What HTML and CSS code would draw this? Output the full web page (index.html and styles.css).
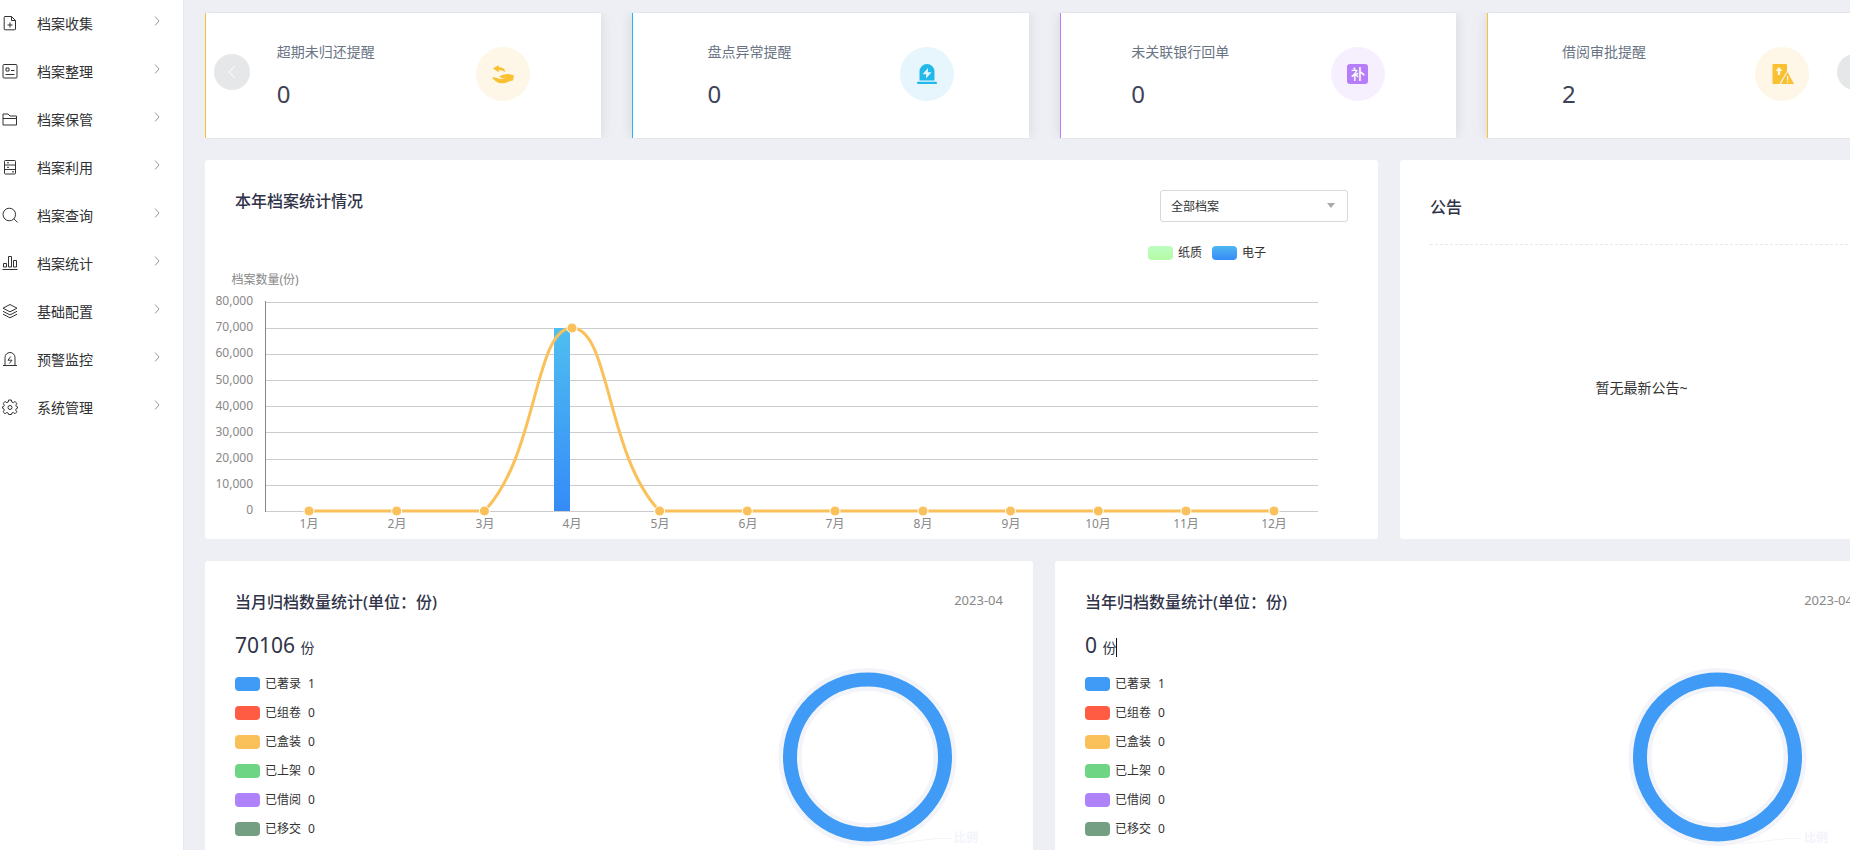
FILE: index.html
```html
<!DOCTYPE html>
<html lang="zh-CN">
<head>
<meta charset="utf-8">
<title>档案管理</title>
<link rel="stylesheet" href="styles.css">
</head>
<body>
<div class="app">
  <nav class="sidebar">
    <a class="nav-item" href="#collect">
      <svg class="nav-icon" viewBox="0 0 16 16"><path d="M3 1.500h6.500l4 4V14a.8.8 0 0 1-.8.8H3a.8.8 0 0 1-.8-.8V2.300a.8.8 0 0 1 .8-.8zM9.500 1.500v4h4M8 7.500v5M5.500 10h5"/></svg>
      <span>档案收集</span><svg class="nav-arrow" viewBox="0 0 6 10"><path d="M1 .5 5 5 1 9.500"/></svg></a>
    <a class="nav-item" href="#arrange">
      <svg class="nav-icon" viewBox="0 0 16 16"><rect x="1" y="1.500" width="14" height="13.500" rx="1"/><path d="M4 5h3v3H4zM9 7.500h3.500M3.500 11.500h9"/></svg>
      <span>档案整理</span><svg class="nav-arrow" viewBox="0 0 6 10"><path d="M1 .5 5 5 1 9.500"/></svg></a>
    <a class="nav-item" href="#keep">
      <svg class="nav-icon" viewBox="0 0 16 16"><path d="M1 14V3h5l2 2h6.500v9zM1 7.500h13.500"/></svg>
      <span>档案保管</span><svg class="nav-arrow" viewBox="0 0 6 10"><path d="M1 .5 5 5 1 9.500"/></svg></a>
    <a class="nav-item" href="#use">
      <svg class="nav-icon" viewBox="0 0 16 16"><rect x="2.500" y="1.500" width="11" height="13.500" rx=".8"/><path d="M2.500 6h11M2.500 10.500h11M5 3.800h2M5 8.300h2M10 12.800h2"/></svg>
      <span>档案利用</span><svg class="nav-arrow" viewBox="0 0 6 10"><path d="M1 .5 5 5 1 9.500"/></svg></a>
    <a class="nav-item" href="#search">
      <svg class="nav-icon" viewBox="0 0 16 16"><circle cx="7.300" cy="7.500" r="6.300"/><path d="m12 12 3.500 3.300"/></svg>
      <span>档案查询</span><svg class="nav-arrow" viewBox="0 0 6 10"><path d="M1 .5 5 5 1 9.500"/></svg></a>
    <a class="nav-item" href="#stats">
      <svg class="nav-icon" viewBox="0 0 16 16"><path d="M1.500 12V8.500h3V12zM6.500 12V1.500h3V12zM11.500 12V5.500h3V12zM.5 14.500h15"/></svg>
      <span>档案统计</span><svg class="nav-arrow" viewBox="0 0 6 10"><path d="M1 .5 5 5 1 9.500"/></svg></a>
    <a class="nav-item" href="#config">
      <svg class="nav-icon" viewBox="0 0 16 16"><path d="m8 1.500 7 3.700-7 3.600-7-3.600zM1 8.300l7 3.600 7-3.600M1 11.200l7 3.600 7-3.600"/></svg>
      <span>基础配置</span><svg class="nav-arrow" viewBox="0 0 6 10"><path d="M1 .5 5 5 1 9.500"/></svg></a>
    <a class="nav-item" href="#alert">
      <svg class="nav-icon" viewBox="0 0 16 16"><path d="M3 14.500V6.500a5 5 0 0 1 10 0v8M1 14.500h14M8.700 5.500 6 9.200h4L7.300 12.500"/></svg>
      <span>预警监控</span><svg class="nav-arrow" viewBox="0 0 6 10"><path d="M1 .5 5 5 1 9.500"/></svg></a>
    <a class="nav-item" href="#system">
      <svg class="nav-icon" viewBox="0 0 16 16"><path d="M6.600 1h2.800l.4 2 1.500.7 1.700-1.200 1.900 1.900-1.100 1.800.6 1.400 1.100.2v1.400l-1.200.4-.6 1.500 1.200 1.700-1.900 1.900-1.700-1.200-1.500.6-.4 1.400H6.600l-.4-1.400-1.500-.6L3 14.700l-1.900-1.900 1.200-1.700-.6-1.500L.5 9.200V7.800l1.200-.2.6-1.400L1.200 4.400l1.900-1.900 1.700 1.200L6.200 3z"/><circle cx="8" cy="8.500" r="2"/></svg>
      <span>系统管理</span><svg class="nav-arrow" viewBox="0 0 6 10"><path d="M1 .5 5 5 1 9.500"/></svg></a>
  </nav>

  <main class="main">
    <section class="reminders">
      <article class="reminder amber">
        <div class="reminder-body"><h3 class="reminder-name">超期未归还提醒</h3><p class="reminder-count">0</p></div>
        <span class="badge"><svg class="badge-icon" viewBox="0 0 24 24"><path d="M2 6.500 7.700 3v1.900c3.800.2 6.200 1.700 7 5.300-2-1.400-4.200-1.900-7-1.900v2z"/><path d="M1 15.500c2.500-1 5 .7 7 1.200 2 .4 4.500.2 6.500-.9-2 .2-4.800.2-6.200-.9.600-1.500 2.900-1.500 4.700-2.300 3-1.300 6-.6 10 .9l-1 5c-2.500-.2-4.500 1.500-7 2.200-2.500.5-5 .8-7 .2-3-1-5-2.700-7-5.400z"/></svg></span>
      </article>
      <article class="reminder cyan">
        <div class="reminder-body"><h3 class="reminder-name">盘点异常提醒</h3><p class="reminder-count">0</p></div>
        <span class="badge"><svg class="badge-icon" viewBox="0 0 24 24"><path d="M4.500 18.500V9.500a7.500 7.500 0 0 1 15 0v9z"/><rect x="2" y="19.700" width="20" height="2.300" rx="1"/><path class="cut" d="M13 6 7.500 12.300h3.700L11 16.500l5.500-6.200h-3.700z"/></svg></span>
      </article>
      <article class="reminder violet">
        <div class="reminder-body"><h3 class="reminder-name">未关联银行回单</h3><p class="reminder-count">0</p></div>
        <span class="badge"><span class="badge-word">补</span></span>
      </article>
      <article class="reminder amber">
        <div class="reminder-body"><h3 class="reminder-name">借阅审批提醒</h3><p class="reminder-count">2</p></div>
        <span class="badge"><svg class="badge-icon" viewBox="0 0 24 24"><path d="M3.500 2H16a1 1 0 0 1 1 1v6L9.300 22H3.500a1 1 0 0 1-1-1V3a1 1 0 0 1 1-1z"/><path d="M17.500 10 24 22H10.800z"/><path class="cut" d="M9 5 5.500 9h2.300v4h2.400V9h2.300zM17 14h1.200v4.500H17zM17 19.500h1.200v1.200H17z"/></svg></span>
      </article>
      <button class="slide-btn prev" aria-label="上一页"><svg viewBox="0 0 16 16"><path d="m11 2-6 6 6 6"/></svg></button>
      <button class="slide-btn next" aria-label="下一页"><svg viewBox="0 0 16 16"><path d="m5 2 6 6-6 6"/></svg></button>
    </section>

    <div class="row row-year">
      <section class="panel">
        <header class="panel-head">
          <h2 class="panel-title">本年档案统计情况</h2>
          <div class="picker">
            <select class="picker-select" aria-label="档案类型"><option>全部档案</option></select>
          </div>
        </header>
        <ul class="legend">
          <li><i class="swatch paper"></i>纸质</li>
          <li><i class="swatch digital"></i>电子</li>
        </ul>
        <svg class="chart" viewBox="0 0 1173 277" role="img" aria-label="档案数量">
          <defs><linearGradient id="bar" x1="0" y1="0" x2="0" y2="1"><stop offset="0" stop-color="#4fbef0"/><stop offset="1" stop-color="#358bf8"/></linearGradient></defs>
          <path class="grid" d="M60 40.500h1053M60 66.500h1053M60 92.500h1053M60 118.500h1053M60 144.500h1053M60 170.500h1053M60 197.500h1053M60 223.500h1053M60 249.500h1053"/>
          <path class="axis" d="M60.500 39v211"/>
          <text class="tick mid" x="60" y="22">档案数量(份)</text>
          <g class="tick end">
            <text x="48" y="43">80,000</text><text x="48" y="69">70,000</text><text x="48" y="95">60,000</text>
            <text x="48" y="122">50,000</text><text x="48" y="148">40,000</text><text x="48" y="174">30,000</text>
            <text x="48" y="200">20,000</text><text x="48" y="226">10,000</text><text x="48" y="252">0</text>
          </g>
          <g class="tick mid">
            <text x="104" y="266">1月</text><text x="192" y="266">2月</text><text x="280" y="266">3月</text>
            <text x="367" y="266">4月</text><text x="455" y="266">5月</text><text x="543" y="266">6月</text>
            <text x="630" y="266">7月</text><text x="718" y="266">8月</text><text x="806" y="266">9月</text>
            <text x="893" y="266">10月</text><text x="981" y="266">11月</text><text x="1069" y="266">12月</text>
          </g>
          <rect x="349" y="66" width="16" height="183" fill="url(#bar)"/>
          <path class="trend" d="M104 249H279.500C333 193 329 66 367 66S401 193 454.600 249H1069"/>
          <g class="dots">
            <circle cx="104" cy="249" r="5"/><circle cx="191.700" cy="249" r="5"/><circle cx="279.400" cy="249" r="5"/>
            <circle cx="367" cy="66" r="5"/><circle cx="454.600" cy="249" r="5"/><circle cx="542.300" cy="249" r="5"/>
            <circle cx="630" cy="249" r="5"/><circle cx="718" cy="249" r="5"/><circle cx="805.500" cy="249" r="5"/>
            <circle cx="893.300" cy="249" r="5"/><circle cx="981" cy="249" r="5"/><circle cx="1069" cy="249" r="5"/>
          </g>
        </svg>
      </section>

      <section class="panel notice">
        <h2 class="panel-title notice-title">公告</h2>
        <p class="notice-empty">暂无最新公告~</p>
      </section>
    </div>

    <div class="row row-archive">
      <section class="panel">
        <header class="panel-head">
          <h2 class="panel-title">当月归档数量统计(单位：份)</h2>
          <time class="period">2023-04</time>
        </header>
        <div class="archive">
          <div>
            <p class="total">70106 <small class="unit">份</small></p>
            <ul class="states">
              <li><i class="swatch blue"></i>已著录 <b>1</b></li>
              <li><i class="swatch red"></i>已组卷 <b>0</b></li>
              <li><i class="swatch orange"></i>已盒装 <b>0</b></li>
              <li><i class="swatch green"></i>已上架 <b>0</b></li>
              <li><i class="swatch purple"></i>已借阅 <b>0</b></li>
              <li><i class="swatch sage"></i>已移交 <b>0</b></li>
            </ul>
          </div>
          <svg class="donut" viewBox="0 0 226 200" role="img" aria-label="比例">
            <circle class="donut-halo" cx="90.500" cy="100" r="77.500"/><circle class="donut-ring" cx="90.500" cy="100" r="77.500"/>
            <path class="donut-lead" d="M112 187 160 181.500h14"/><text class="donut-text" x="177" y="185">比例</text>
          </svg>
        </div>
      </section>
      <section class="panel">
        <header class="panel-head">
          <h2 class="panel-title">当年归档数量统计(单位：份)</h2>
          <time class="period">2023-04</time>
        </header>
        <div class="archive">
          <div>
            <p class="total">0 <small class="unit">份</small><i class="caret"></i></p>
            <ul class="states">
              <li><i class="swatch blue"></i>已著录 <b>1</b></li>
              <li><i class="swatch red"></i>已组卷 <b>0</b></li>
              <li><i class="swatch orange"></i>已盒装 <b>0</b></li>
              <li><i class="swatch green"></i>已上架 <b>0</b></li>
              <li><i class="swatch purple"></i>已借阅 <b>0</b></li>
              <li><i class="swatch sage"></i>已移交 <b>0</b></li>
            </ul>
          </div>
          <svg class="donut" viewBox="0 0 226 200" role="img" aria-label="比例">
            <circle class="donut-halo" cx="90.500" cy="100" r="77.500"/><circle class="donut-ring" cx="90.500" cy="100" r="77.500"/>
            <path class="donut-lead" d="M112 187 160 181.500h14"/><text class="donut-text" x="177" y="185">比例</text>
          </svg>
        </div>
      </section>
    </div>
  </main>
</div>
</body>
</html>
```

FILE: styles.css
```css
* { box-sizing: border-box; }

body, h2, h3, p, ul { margin: 0; padding: 0; }

body {
  background: #edeff4;
  color: #333;
  font-family: "Noto Sans", "Noto Sans CJK SC", sans-serif;
  font-size: 14px;
  overflow: hidden;
}

ul { list-style: none; }

.app {
  display: flex;
  height: 100vh;
  overflow: hidden;
}

/* Sidebar */
.sidebar {
  flex: 0 0 184px;
  background: #fff;
  border-right: 1px solid #e6e9ef;
}

.nav-item {
  display: flex;
  align-items: center;
  height: 48px;
  padding: 0 23px 2px 2px;
  color: #303133;
  text-decoration: none;
}

.nav-icon {
  width: 16px;
  height: 16px;
  margin-right: 19px;
  fill: none;
  stroke: #333;
  stroke-width: 1;
}

.nav-arrow {
  width: 6px;
  height: 10px;
  margin: 0 0 4px auto;
  fill: none;
  stroke: #999;
}

.main {
  flex: 1;
  min-width: 0;
  margin-right: -33px;
  padding: 12px 0 0 21px;
}

/* Reminder carousel */
.reminders {
  position: relative;
  display: grid;
  grid-template-columns: repeat(4, 1fr);
  gap: 31px;
  padding: 1px 0;
  margin-bottom: 21px;
  overflow: hidden;
}

.reminder {
  display: flex;
  align-items: center;
  justify-content: space-around;
  height: 125px;
  padding: 0 20px 4px;
  background: #fff;
  border-left: 1px solid var(--tone);
  box-shadow: 0 0 12px rgba(0, 0, 0, 0.1);
}

.amber { --tone: #f9c132; --tint: #fef7e8; }
.cyan { --tone: #20b9e9; --tint: #e7f6fc; }
.violet { --tone: #b57df7; --tint: #f6f0fe; }

.reminder-body { padding-top: 4px; }

.reminder-name {
  color: #6a7484;
  font-size: 14px;
  font-weight: 400;
  line-height: 20px;
}

.reminder-count {
  margin-top: 16px;
  color: #3e4257;
  font-size: 24px;
  line-height: 32px;
}

.badge {
  display: grid;
  place-items: center;
  width: 54px;
  height: 54px;
  background: var(--tint);
  border-radius: 50%;
}

.badge-icon {
  width: 24px;
  height: 24px;
  fill: var(--tone);
}

.badge-icon .cut { fill: var(--tint); }

.badge-word {
  width: 21px;
  height: 20px;
  background: var(--tone);
  border-radius: 3px;
  color: #fff;
  font-size: 14px;
  font-weight: 500;
  line-height: 20px;
  text-align: center;
}

.slide-btn {
  position: absolute;
  top: 42px;
  display: grid;
  place-items: center;
  width: 36px;
  height: 36px;
  padding: 0;
  background: #e6e7e9;
  border: 0;
  border-radius: 50%;
}

.slide-btn svg {
  width: 16px;
  height: 16px;
  fill: none;
  stroke: #fff;
}

.prev { left: 9px; }
.next { right: 10px; }

/* Panels */
.row {
  display: grid;
  gap: 22px;
  margin-bottom: 22px;
}

.row-year { grid-template-columns: 17fr 7fr; }
.row-archive { grid-template-columns: 1fr 1fr; }

.panel {
  padding-top: 30px;
  background: #fff;
  border-radius: 3px;
}

.panel-head {
  display: flex;
  align-items: flex-start;
  justify-content: space-between;
  padding: 0 30px;
}

.panel-title {
  color: #303348;
  font-size: 16px;
  font-weight: 500;
  line-height: 22px;
}

.picker {
  position: relative;
  width: 188px;
}

.picker::after {
  content: "";
  position: absolute;
  top: 13px;
  right: 13px;
  border: 4px solid transparent;
  border-top: 5px solid #aaa;
  border-bottom: 0;
  pointer-events: none;
}

.picker-select {
  display: block;
  width: 100%;
  height: 32px;
  padding: 0 10px;
  appearance: none;
  background: #fff;
  border: 1px solid #d9d9d9;
  border-radius: 3px;
  color: #333;
  font: inherit;
  font-size: 12px;
}

.legend {
  display: flex;
  justify-content: flex-end;
  gap: 10px;
  margin-top: 22px;
  padding-right: 112px;
  font-size: 12px;
  line-height: 18px;
}

.legend li, .states li {
  display: flex;
  align-items: center;
}

.swatch {
  width: 25px;
  height: 14px;
  margin-right: 5px;
  border-radius: 4px;
}

.paper { background: linear-gradient(#bdfcc0, #b4fca6); }
.digital { background: linear-gradient(#4fb6f0, #358bf8); }
.blue { background: #3f9bf5; }
.red { background: #ff5c43; }
.orange { background: #fac05a; }
.green { background: #6ed585; }
.purple { background: #ae82f8; }
.sage { background: #749f83; }

/* Year chart */
.chart {
  display: block;
  width: 100%;
  height: auto;
}

.grid { stroke: #ccc; }
.axis { stroke: #888; }
.tick { fill: #888; font-size: 12px; }
.mid { text-anchor: middle; }
.end { text-anchor: end; }

.trend {
  fill: none;
  stroke: #fac05a;
  stroke-width: 3;
}

.dots circle {
  fill: #fac05a;
  stroke: #fff;
  stroke-width: 1;
}

/* Notice */
.notice {
  display: flex;
  flex-direction: column;
  padding: 30px 30px 10px;
}

.notice-title {
  padding-bottom: 20px;
  border-bottom: 1px dashed #e6e6f2;
  line-height: 34px;
}

.notice-empty {
  display: grid;
  flex: 1;
  place-items: center;
}

/* Archive panels */
.period {
  color: #888;
  font-size: 13px;
  line-height: 18px;
}

.archive {
  display: flex;
  align-items: flex-start;
  justify-content: space-between;
  margin-top: 16px;
  padding: 0 30px 30px;
}

.total {
  color: #303348;
  font-size: 21px;
  line-height: 32px;
}

.unit { font-size: 14px; }

.caret {
  display: inline-block;
  width: 1px;
  height: 19px;
  background: #111;
  vertical-align: -4px;
}

.states {
  margin-top: 5px;
  font-size: 12px;
  line-height: 29px;
}

.states b {
  margin-left: 7px;
  font-weight: 400;
}

.donut {
  width: 226px;
  height: 200px;
  margin-top: 28px;
  fill: none;
}

.donut-halo { stroke: #f3f4fa; stroke-width: 23; }
.donut-ring { stroke: #3f9bf5; stroke-width: 14; }
.donut-lead { stroke: #f3f4fa; }
.donut-text { fill: #f3f4fa; font-size: 12px; font-weight: 700; }
```
